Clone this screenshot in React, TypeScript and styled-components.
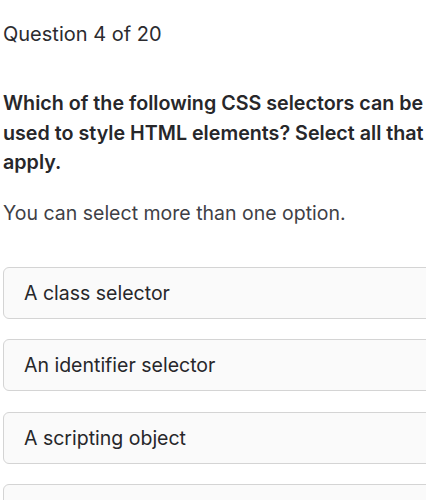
import React from "react";
import styled, { createGlobalStyle } from "styled-components";

const Global = createGlobalStyle`
  html, body {
    margin: 0;
    padding: 0;
    background: #ffffff;
    overflow: hidden;
  }
  body {
    font-family: Inter, "Noto Sans", sans-serif;
    color: #27272a;
  }
`;

const Page = styled.main`
  width: 440px;
  padding: 20px 0 0 3px;
  box-sizing: border-box;
`;

const Counter = styled.div`
  font-size: 20px;
  line-height: 28px;
  font-weight: 400;
  color: #2b2b2f;
`;

const Prompt = styled.h2`
  margin: 41px 0 0;
  font-size: 19.7px;
  line-height: 29.7px;
  font-weight: 600;
  color: #27272a;
`;

const Hint = styled.p`
  margin: 20px 0 0;
  font-size: 19.5px;
  line-height: 30px;
  font-weight: 400;
  color: #3f3f46;
`;

const Options = styled.div`
  display: flex;
  flex-direction: column;
  gap: 20.3px;
  margin-top: 39px;
`;

const Option = styled.button`
  display: flex;
  align-items: center;
  height: 52px;
  padding: 0 20px;
  box-sizing: border-box;
  width: 100%;
  background: #fafafa;
  border: 1.5px solid #d4d4d4;
  border-radius: 6px;
  font-family: inherit;
  font-size: 19.5px;
  color: #27272a;
  text-align: left;
  cursor: pointer;
`;

const options = [
  "A class selector",
  "An identifier selector",
  "A scripting object",
  "An element selector",
];

export default function App() {
  return (
    <>
      <Global />
      <Page>
        <Counter>Question 4 of 20</Counter>
        <Prompt>
          Which of the following CSS selectors can be used to style HTML
          elements? Select all that apply.
        </Prompt>
        <Hint>You can select more than one option.</Hint>
        <Options>
          {options.map((o) => (
            <Option key={o}>{o}</Option>
          ))}
        </Options>
      </Page>
    </>
  );
}
